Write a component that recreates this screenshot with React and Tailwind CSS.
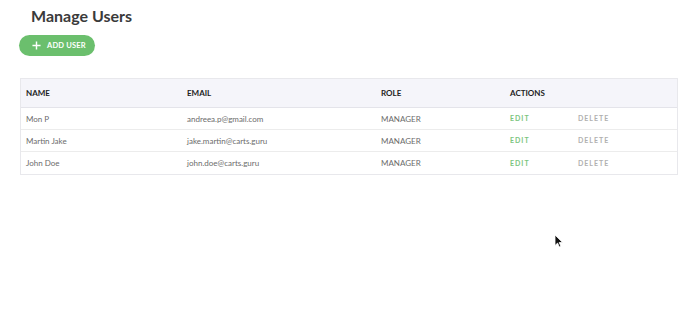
import React from "react";

const users = [
  { name: "Mon P", email: "andreea.p@gmail.com", role: "MANAGER" },
  { name: "Martin Jake", email: "jake.martin@carts.guru", role: "MANAGER" },
  { name: "John Doe", email: "john.doe@carts.guru", role: "MANAGER" },
];

const cols = "grid grid-cols-[161px_194px_129px_1fr]";

const App = () => {
  return (
    <div className="relative w-[688px] h-[324px] bg-white font-['Lato',_'Open_Sans',_sans-serif] overflow-hidden">
      <div className="pt-[5px]">
        <h1 className="pl-[31px] text-[16px] leading-[22px] font-bold text-[#3a3a3a]">
          Manage Users
        </h1>
        <button className="mt-[8px] ml-[19px] flex items-center h-[21px] w-[76px] rounded-full bg-[#6bbf6d] text-white pl-[13px]">
          <svg width="9" height="9" viewBox="0 0 10 10" className="mr-[6px]">
            <path d="M5 0.5v9M0.5 5h9" stroke="white" strokeWidth="1.6" />
          </svg>
          <span className="text-[7.5px] font-bold tracking-[0.2px]">ADD USER</span>
        </button>
      </div>

      <div className="mt-[22px] mx-[20px] w-[658px] border border-[#e8e8ec] text-[8px]">
        <div className={`${cols} h-[29px] items-center bg-[#f5f5fa] border-b border-[#e4e4ea] font-bold text-[#222]`}>
          <div className="pl-[5px]">NAME</div>
          <div className="pl-[5px]">EMAIL</div>
          <div className="pl-[5px]">ROLE</div>
          <div className="pl-[5px]">ACTIONS</div>
        </div>
        {users.map((u, i) => (
          <div
            key={i}
            className={`${cols} h-[22px] items-center text-[#6b6b6b] ${i < users.length - 1 ? "border-b border-[#ececec]" : ""}`}
          >
            <div className="pl-[5px]">{u.name}</div>
            <div className="pl-[5px]">{u.email}</div>
            <div className="pl-[5px]">{u.role}</div>
            <div className="pl-[5px] flex items-center text-[7px] font-bold tracking-[1px]">
              <span className="w-[68px] text-[#7cc57e]">EDIT</span>
              <span className="text-[#b0b0b0]">DELETE</span>
            </div>
          </div>
        ))}
      </div>

      <svg className="absolute left-[554px] top-[234px]" width="10" height="14" viewBox="0 0 10 14">
        <path d="M1 1v10.5l2.6-2.4 1.7 3.9 1.6-.7-1.7-3.8h3.4z" fill="#111" stroke="white" strokeWidth="0.8" />
      </svg>
    </div>
  );
};

export default App;
